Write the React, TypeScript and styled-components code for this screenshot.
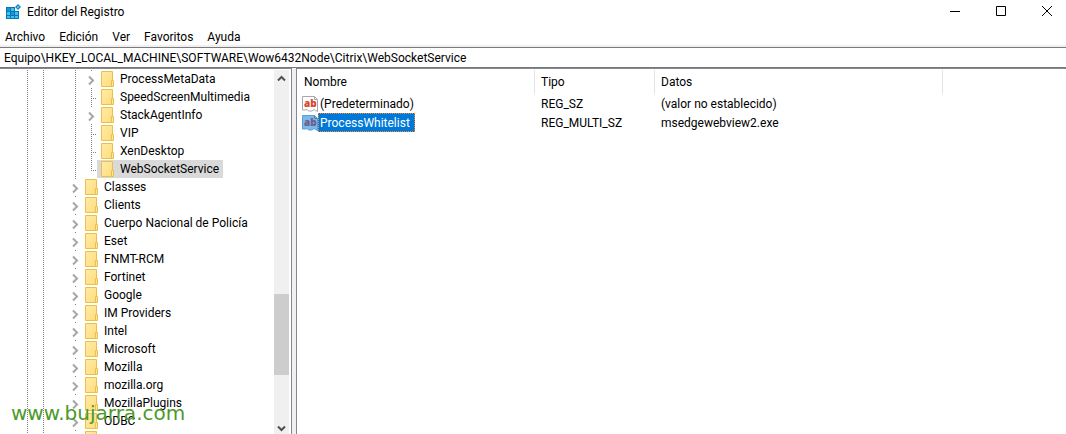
import React from "react";
import styled, { createGlobalStyle, css } from "styled-components";

const uiFont = `Roboto, "Open Sans", sans-serif`;
const frame = "#828790";
const face = "#f0f0f0";
const dotsDown = "repeating-linear-gradient(to bottom, #808080 0 1px, transparent 1px 2px)";
const dotsAcross = "repeating-linear-gradient(to right, #808080 0 1px, transparent 1px 2px)";

const GlobalStyle = createGlobalStyle`
  *, *::before, *::after { box-sizing: border-box; }
  body {
    margin: 0;
    background: #fff;
    color: #000;
    font: 12px/18px ${uiFont};
  }
  button, input { font: inherit; color: inherit; }
`;

const Window = styled.div`
  position: relative;
  display: flex;
  flex-direction: column;
  height: 100vh;
  overflow: hidden;
`;

const PlainButton = styled.button`
  display: flex;
  align-items: center;
  justify-content: center;
  padding: 0;
  border: 0;
  background: none;
`;

const TitleBar = styled.header`
  display: flex;
  flex: none;
  align-items: center;
  gap: 6px;
  height: 24px;
  padding: 0 14px 0 5px;
`;

const Title = styled.h1`
  flex: 1;
  margin: 0;
  font-size: 12px;
  font-weight: 400;
`;

const WindowControls = styled.div`
  display: flex;
  gap: 36px;
  padding-bottom: 2px;
`;

const MenuBar = styled.nav`
  display: flex;
  flex: none;
  gap: 14px;
  height: 23px;
  padding: 4px 5px 0;
  border-bottom: 2px solid ${face};
`;

const MenuItem = styled(PlainButton)`
  height: 18px;
`;

const AddressInput = styled.input`
  flex: none;
  width: 100%;
  height: 21px;
  padding: 0 4px;
  border: solid #7a7a7a;
  border-width: 1px 0;
  border-radius: 0;
  background: #fff;
  outline: 0;
`;

const Panes = styled.main`
  display: flex;
  flex: 1;
  min-height: 0;
`;

const TreePane = styled.section`
  display: flex;
  flex: none;
  width: 292px;
  border: solid ${frame};
  border-width: 1px 1px 0 0;
`;

const Splitter = styled.div`
  flex: none;
  width: 4px;
  background: ${face};
`;

const ListPane = styled.section`
  flex: 1;
  min-width: 0;
  overflow: hidden;
  padding-top: 1px;
  border: solid ${frame};
  border-width: 1px 0 0 1px;
`;

const Tree = styled.ul`
  flex: 1;
  min-width: 0;
  margin: 0;
  padding: 1px 0 0;
  overflow: hidden;
  list-style: none;
`;

const TreeRow = styled.li`
  display: flex;
  height: 18px;
  padding-left: 20px;
`;

const Guide = styled.span<{ $line: boolean }>`
  flex: none;
  width: 16px;
  ${(p) =>
    p.$line &&
    css`
      background: ${dotsDown} 7px 0 / 1px 100% no-repeat;
    `}
`;

const Branch = styled.span<{ $last: boolean }>`
  flex: none;
  width: 13px;
  background:
    ${dotsDown} 7px 0 / 1px ${(p) => (p.$last ? "11px" : "100%")} no-repeat,
    ${dotsAcross} 7px 10px / 6px 1px no-repeat;
`;

const Expander = styled(PlainButton)`
  flex: none;
  width: 13px;
  background: ${dotsDown} 7px 0 / 1px 1px no-repeat;
`;

const NodeLabel = styled.span<{ $selected?: boolean }>`
  display: flex;
  align-items: center;
  gap: 5px;
  padding: 0 4px;
  white-space: nowrap;
  background: ${(p) => (p.$selected ? "#d9d9d9" : "transparent")};
`;

const ScrollBar = styled.div`
  display: flex;
  flex: none;
  flex-direction: column;
  width: 17px;
  margin: 1px 0 0;
  border-right: 2px solid #fff;
  background: ${face};
`;

const ScrollButton = styled(PlainButton)<{ $height: number }>`
  flex: none;
  height: ${(p) => p.$height}px;
`;

const TrackSpace = styled.div<{ $grow: number }>`
  flex: ${(p) => p.$grow} 0 0;
`;

const Thumb = styled(TrackSpace)`
  background: #cdcdcd;
`;

const ValueTable = styled.table`
  width: 100%;
  table-layout: fixed;
  border-collapse: separate;
  border-spacing: 0;
`;

const HeadCell = styled.th<{ $width?: number }>`
  width: ${(p) => (p.$width ? `${p.$width}px` : "auto")};
  height: 24px;
  padding: 0 6px;
  border-right: ${(p) => (p.$width ? "1px solid #e5e5e5" : "0")};
  font-weight: 400;
  text-align: left;
  &:first-child { padding-left: 7px; }
`;

const Cell = styled.td`
  height: 19px;
  padding: 1px 6px 0;
  white-space: nowrap;
`;

const NameCell = styled(Cell)`
  padding: 0 6px 0 5px;
`;

const ValueName = styled.span`
  display: flex;
  align-items: center;
  height: 19px;
`;

const ValueText = styled.span<{ $selected?: boolean }>`
  padding: 1px 5px 0 2px;
  ${(p) =>
    p.$selected &&
    css`
      background: #0078d7;
      color: #fff;
      outline: 1px dotted #ff8728;
      outline-offset: -1px;
    `}
`;

const ValueIcon = styled.svg`
  flex: none;
  overflow: visible;
`;

const Watermark = styled.div`
  position: absolute;
  left: 11px;
  bottom: 9px;
  color: #4c9a2a;
  font: 20px/24px "DejaVu Sans", sans-serif;
`;

const RegistryIcon = () => (
  <svg width="16" height="16" viewBox="0 0 16 16" aria-hidden="true">
    <path d="M1 3h9v4h4v8H1z" fill="#0a78b0" />
    <g fill="#3fc0f0">
      <path d="M2 4h3v3H2zM6 4h3v3H6z" />
      <path d="M2 8h3v3H2zM6 8h3v3H6zM10 8h3v3h-3z" />
      <path d="M2 12h3v2H2zM6 12h3v2H6zM10 12h3v2h-3z" />
    </g>
    <path d="M6 8h3v3H6zM2 4h3v3H2z" fill="#1795d4" />
    <path d="M13 0l3 3-3 3-3-3z" fill="#1583bd" />
    <path d="M13 1.6l1.4 1.4L13 4.4 11.6 3z" fill="#5fcdf5" />
  </svg>
);

const FolderIcon = () => (
  <svg width="14" height="16" viewBox="0 0 14 16" aria-hidden="true">
    <defs>
      <linearGradient id="folder" x1="0" y1="0" x2="1" y2="1">
        <stop offset="0" stopColor="#ffeba6" />
        <stop offset="1" stopColor="#ffdc7c" />
      </linearGradient>
    </defs>
    <path d="M.5.5h11v15H.5z" fill="url(#folder)" stroke="#e9c04c" />
    <path d="M10.5 9.5h2v6h-2z" fill="#ffe591" stroke="#e9c04c" />
  </svg>
);

const ChevronIcon = () => (
  <svg width="13" height="18" viewBox="0 0 13 18" aria-hidden="true">
    <path d="M5 6.5l4 4-4 4" fill="none" stroke="#a6a6a6" strokeWidth="2" />
  </svg>
);

const StringValueIcon = ({ selected = false }: { selected?: boolean }) => (
  <ValueIcon width="16" height="16" viewBox="0 0 16 16" aria-hidden="true">
    <path
      d="M.5.5h12l3 3v12l-2-1-1.5-1-2 1.5H6.5L5 13.5l-2 .5H.5z"
      fill={selected ? "#7db8e8" : "#fff"}
      stroke={selected ? "#5b9fd6" : "#a8a8a8"}
    />
    <path d="M12.5.5v3h3" fill="none" stroke={selected ? "#4a7fae" : "#a8a8a8"} />
    <text
      x="2"
      y="11"
      fontFamily="Open Sans"
      fontWeight="800"
      fontSize="10"
      fill={selected ? "#6b5f8c" : "#d9472b"}
    >
      ab
    </text>
  </ValueIcon>
);

const ArrowIcon = ({ down = false }: { down?: boolean }) => (
  <svg width="9" height="7" viewBox="0 0 9 7" aria-hidden="true">
    <path d={down ? "M1 1.5l3.5 3.5L8 1.5" : "M1 5.5L4.5 2 8 5.5"} fill="none" stroke="#505050" strokeWidth="2" />
  </svg>
);

const controls = [
  { label: "Minimizar", path: "M0 5.5h10" },
  { label: "Maximizar", path: "M.5.5h9v9h-9z" },
  { label: "Cerrar", path: "M0 0l10 10M10 0L0 10" },
];

const menus = ["Archivo", "Edición", "Ver", "Favoritos", "Ayuda"];

type Key = { name: string; expandable?: boolean };

const citrixKeys: Key[] = [
  { name: "ProcessMetaData", expandable: true },
  { name: "SpeedScreenMultimedia" },
  { name: "StackAgentInfo", expandable: true },
  { name: "VIP" },
  { name: "XenDesktop" },
  { name: "WebSocketService" },
];

const nodeKeys = [
  "Classes",
  "Clients",
  "Cuerpo Nacional de Policía",
  "Eset",
  "FNMT-RCM",
  "Fortinet",
  "Google",
  "IM Providers",
  "Intel",
  "Microsoft",
  "Mozilla",
  "mozilla.org",
  "MozillaPlugins",
  "ODBC",
  "",
];

const values = [
  { name: "(Predeterminado)", type: "REG_SZ", data: "(valor no establecido)" },
  { name: "ProcessWhitelist", type: "REG_MULTI_SZ", data: "msedgewebview2.exe", selected: true },
];

const OuterGuides = () => (
  <>
    <Guide $line />
    <Guide $line />
    <Guide $line={false} />
  </>
);

export default function App() {
  return (
    <Window>
      <GlobalStyle />
      <TitleBar>
        <RegistryIcon />
        <Title>Editor del Registro</Title>
        <WindowControls>
          {controls.map((c) => (
            <PlainButton key={c.label} aria-label={c.label}>
              <svg width="10" height="10" viewBox="0 0 10 10" aria-hidden="true">
                <path d={c.path} fill="none" stroke="#000" />
              </svg>
            </PlainButton>
          ))}
        </WindowControls>
      </TitleBar>
      <MenuBar>
        {menus.map((m) => (
          <MenuItem key={m}>{m}</MenuItem>
        ))}
      </MenuBar>
      <AddressInput
        aria-label="Ruta"
        defaultValue={"Equipo\\HKEY_LOCAL_MACHINE\\SOFTWARE\\Wow6432Node\\Citrix\\WebSocketService"}
      />
      <Panes>
        <TreePane>
          <Tree>
            {citrixKeys.map((k, i) => (
              <TreeRow key={k.name}>
                <OuterGuides />
                <Guide $line />
                {k.expandable ? (
                  <Expander aria-label={`Expandir ${k.name}`}>
                    <ChevronIcon />
                  </Expander>
                ) : (
                  <Branch $last={i === citrixKeys.length - 1} />
                )}
                <NodeLabel $selected={k.name === "WebSocketService"}>
                  <FolderIcon />
                  {k.name}
                </NodeLabel>
              </TreeRow>
            ))}
            {nodeKeys.map((name) => (
              <TreeRow key={name}>
                <OuterGuides />
                <Expander aria-label={`Expandir ${name}`}>
                  <ChevronIcon />
                </Expander>
                <NodeLabel>
                  <FolderIcon />
                  {name}
                </NodeLabel>
              </TreeRow>
            ))}
          </Tree>
          <ScrollBar>
            <ScrollButton $height={17} aria-label="Subir">
              <ArrowIcon />
            </ScrollButton>
            <TrackSpace $grow={207} />
            <Thumb $grow={81} />
            <TrackSpace $grow={47} />
            <ScrollButton $height={12} aria-label="Bajar">
              <ArrowIcon down />
            </ScrollButton>
          </ScrollBar>
        </TreePane>
        <Splitter />
        <ListPane>
          <ValueTable>
            <thead>
              <tr>
                <HeadCell $width={238}>Nombre</HeadCell>
                <HeadCell $width={120}>Tipo</HeadCell>
                <HeadCell $width={288}>Datos</HeadCell>
                <HeadCell as="td" />
              </tr>
            </thead>
            <tbody>
              {values.map((v) => (
                <tr key={v.name}>
                  <NameCell>
                    <ValueName>
                      <StringValueIcon selected={v.selected} />
                      <ValueText $selected={v.selected}>{v.name}</ValueText>
                    </ValueName>
                  </NameCell>
                  <Cell>{v.type}</Cell>
                  <Cell>{v.data}</Cell>
                  <Cell />
                </tr>
              ))}
            </tbody>
          </ValueTable>
        </ListPane>
      </Panes>
      <Watermark>www.bujarra.com</Watermark>
    </Window>
  );
}
